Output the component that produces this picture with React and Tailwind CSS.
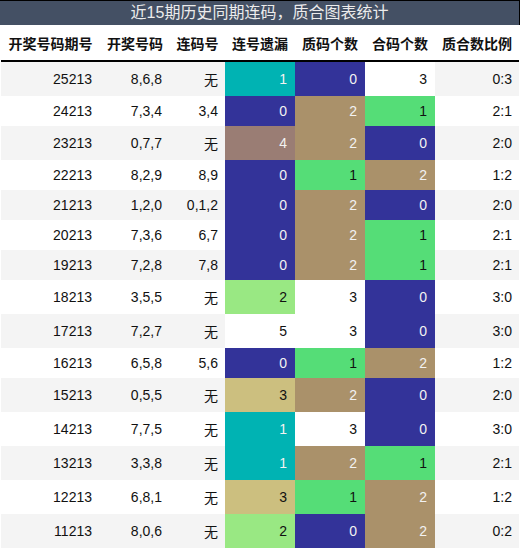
const rows = [
  ["25213", "8,6,8", "无", [1, "teal"], [0, "navy"], [3, "white"], "0:3"],
  ["24213", "7,3,4", "3,4", [0, "navy"], [2, "tan"], [1, "green"], "2:1"],
  ["23213", "0,7,7", "无", [4, "mauve"], [2, "tan"], [0, "navy"], "2:0"],
  ["22213", "8,2,9", "8,9", [0, "navy"], [1, "green"], [2, "tan"], "1:2"],
  ["21213", "1,2,0", "0,1,2", [0, "navy"], [2, "tan"], [0, "navy"], "2:0"],
  ["20213", "7,3,6", "6,7", [0, "navy"], [2, "tan"], [1, "green"], "2:1"],
  ["19213", "7,2,8", "7,8", [0, "navy"], [2, "tan"], [1, "green"], "2:1"],
  ["18213", "3,5,5", "无", [2, "lime"], [3, "white"], [0, "navy"], "3:0"],
  ["17213", "7,2,7", "无", [5, "white"], [3, "white"], [0, "navy"], "3:0"],
  ["16213", "6,5,8", "5,6", [0, "navy"], [1, "green"], [2, "tan"], "1:2"],
  ["15213", "0,5,5", "无", [3, "khaki"], [2, "tan"], [0, "navy"], "2:0"],
  ["14213", "7,7,5", "无", [1, "teal"], [3, "white"], [0, "navy"], "3:0"],
  ["13213", "3,3,8", "无", [1, "teal"], [2, "tan"], [1, "green"], "2:1"],
  ["12213", "6,8,1", "无", [3, "khaki"], [1, "green"], [2, "tan"], "1:2"],
  ["11213", "8,0,6", "无", [2, "lime"], [0, "navy"], [2, "tan"], "0:2"],
];

// fill + text colour for the coloured cells
const swatch = {
  teal: "bg-[#00b3b3] text-[#f2f2f2]",
  navy: "bg-[#333399] text-[#f2f2f2]",
  tan: "bg-[#aa916a] text-[#f2f2f2]",
  mauve: "bg-[#9a7d74] text-[#f2f2f2]",
  green: "bg-[#55dd77] text-[#111]",
  lime: "bg-[#99e883] text-[#111]",
  khaki: "bg-[#ccbf7f] text-[#111]",
  white: "bg-white text-[#111]",
};

const headers = ["开奖号码期号", "开奖号码", "连码号", "连号遗漏", "质码个数", "合码个数", "质合数比例"];
const widths = ["w-[99px]", "w-[70px]", "w-[55px]", "w-[70px]", "w-[70px]", "w-[70px]", "w-[84px]"];

export default function App() {
  return (
    <div
      className="w-[520px] bg-white leading-[normal] text-[14px] text-[#111]"
      style={{ fontFamily: '"Liberation Sans", "Noto Sans CJK SC", sans-serif' }}
    >
      <div className="h-[25px] border-t border-r border-black bg-[#445064] text-center text-[16px] leading-[24px] text-[#ececec]">
        近15期历史同期连码，质合图表统计
      </div>

      <table className="ml-px w-[518px] table-fixed border-collapse">
        <colgroup>
          {widths.map((w, i) => (
            <col key={i} className={w} />
          ))}
        </colgroup>
        <thead>
          <tr className="border-b-2 border-black">
            {headers.map((h) => (
              <th key={h} className="pt-[8px] pb-[7px] text-center font-bold whitespace-nowrap">
                {h}
              </th>
            ))}
          </tr>
        </thead>
        <tbody>
          {rows.map((r, i) => {
            const stripe = i % 2 === 0 ? "bg-[#f4f4f4]" : "bg-white";
            return (
              <tr key={r[0]} className={stripe}>
                <td className="py-[7px] pr-[8px] text-right">{r[0]}</td>
                <td className="py-[7px] pr-[8px] text-right">{r[1]}</td>
                <td className="py-[7px] pr-[7px] text-right">{r[2]}</td>
                {[r[3], r[4], r[5]].map(([v, c], j) => (
                  <td key={j} className={`py-[7px] pr-[8px] text-right ${swatch[c]}`}>
                    {v}
                  </td>
                ))}
                <td className="py-[7px] pr-[7px] text-right">{r[6]}</td>
              </tr>
            );
          })}
        </tbody>
      </table>
    </div>
  );
}
